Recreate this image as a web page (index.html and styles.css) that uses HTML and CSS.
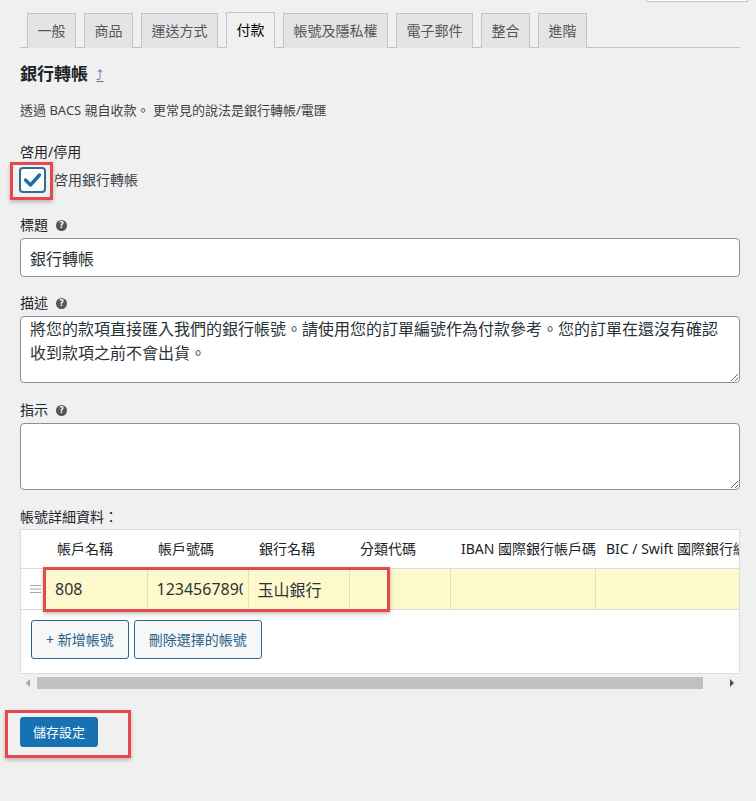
FILE: index.html
```html
<!DOCTYPE html>
<html lang="zh-Hant">
<head>
  <meta charset="UTF-8" />
  <meta name="viewport" content="width=device-width, initial-scale=1.0"/>
  <title>付款 ‹ WooCommerce 設定</title>
  <link rel="stylesheet" href="styles.css">
</head>
<body>
  <div class="screen-meta"><div class="screen-meta-tab"></div></div>

  <div class="wrap">
    <nav class="nav-tabs">
      <a class="nav-tab" href="#">一般</a>
      <a class="nav-tab" href="#">商品</a>
      <a class="nav-tab" href="#">運送方式</a>
      <a class="nav-tab active" href="#">付款</a>
      <a class="nav-tab" href="#">帳號及隱私權</a>
      <a class="nav-tab" href="#">電子郵件</a>
      <a class="nav-tab" href="#">整合</a>
      <a class="nav-tab" href="#">進階</a>
    </nav>

    <h2 class="section-title">銀行轉帳 <a class="back-link" href="#">⤴</a></h2>
    <p class="section-desc">透過 BACS 親自收款。 更常見的說法是銀行轉帳/電匯</p>

    <!-- 啓用/停用 -->
    <div class="field field-wide">
      <div class="field-label">啓用/停用</div>
      <label class="check-row">
        <span class="check-box">
          <svg width="23" height="22" viewBox="0 0 23 22">
            <path d="M4.5 11 L9.5 16 L18.5 6" fill="none" stroke="#1c6ea4" stroke-width="3.4" stroke-linecap="round" stroke-linejoin="round"/>
          </svg>
        </span>
        啓用銀行轉帳
      </label>
    </div>

    <div class="field field-wide">
      <div class="field-label">標題 <span class="help-tip">?</span></div>
      <input class="text-input" type="text" value="銀行轉帳">
    </div>

    <div class="field">
      <div class="field-label">描述 <span class="help-tip">?</span></div>
      <textarea class="text-area">將您的款項直接匯入我們的銀行帳號。請使用您的訂單編號作為付款參考。您的訂單在還沒有確認收到款項之前不會出貨。</textarea>
    </div>

    <div class="field field-loose">
      <div class="field-label">指示 <span class="help-tip">?</span></div>
      <textarea class="text-area"></textarea>
    </div>

    <!-- 帳號詳細資料 -->
    <div class="field field-loose">
      <div class="field-label tight">帳號詳細資料：</div>
      <div class="accounts">
        <table class="accounts-table">
          <colgroup>
            <col style="width: 25px">
            <col style="width: 101px">
            <col style="width: 101px">
            <col style="width: 101px">
            <col style="width: 101px">
            <col style="width: 145px">
            <col style="width: 180px">
          </colgroup>
          <thead>
            <tr>
              <th></th>
              <th>帳戶名稱</th>
              <th>帳戶號碼</th>
              <th>銀行名稱</th>
              <th>分類代碼</th>
              <th>IBAN 國際銀行帳戶碼</th>
              <th>BIC / Swift 國際銀行編號</th>
            </tr>
          </thead>
          <tbody>
            <tr>
              <td class="sort">
                <svg width="11" height="8" viewBox="0 0 11 8">
                  <path d="M0 0.5H11M0 4H11M0 7.5H11" stroke="#a7aaad" stroke-width="1"/>
                </svg>
              </td>
              <td><input type="text" value="808"></td>
              <td><input type="text" value="1234567890"></td>
              <td><input type="text" value="玉山銀行"></td>
              <td><input type="text" value=""></td>
              <td><input type="text" value=""></td>
              <td><input type="text" value=""></td>
            </tr>
          </tbody>
        </table>
        <div class="accounts-actions">
          <button class="button">+ 新增帳號</button>
          <button class="button">刪除選擇的帳號</button>
        </div>
        <div class="row-mark"></div>
      </div>

      <div class="hscroll">
        <span class="arrow-left"></span>
        <span class="thumb"></span>
        <span class="arrow-right"></span>
      </div>
    </div>

    <div class="submit">
      <span class="submit-mark">
        <button class="button-primary">儲存設定</button>
      </span>
    </div>
  </div>
</body>
</html>
```

FILE: styles.css
```css
* {
  box-sizing: border-box;
}
html {
  overflow: hidden;
}
html, body {
  margin: 0;
  padding: 0;
  background: #f0f0f1;
  color: #1d2327;
  font-family: "Noto Sans", "Noto Sans CJK TC", sans-serif;
  font-size: 14px;
  line-height: 20px;
}
a {
  text-decoration: none;
}

/* 右上角畫面選項 */
.screen-meta {
  display: flex;
  justify-content: flex-end;
  height: 2px;
  padding-right: 8px;
}
.screen-meta-tab {
  width: 102px;
  height: 2px;
  background: #fff;
  border: 1px solid #c3c4c7;
  border-top: none;
}

.wrap {
  width: 740px;
  padding: 0 0 40px 20px;
}

/* 分頁 */
.nav-tabs {
  display: flex;
  align-items: flex-end;
  margin-top: 10px;
  border-bottom: 1px solid #c3c4c7;
}
.nav-tab {
  margin-left: 8px;
  margin-bottom: -1px;
  padding: 5px 9.5px;
  line-height: 24px;
  font-size: 14px;
  color: #50575e;
  background: #e4e4e5;
  border: 1px solid #c3c4c7;
  border-bottom: none;
  white-space: nowrap;
}
.nav-tab:first-child {
  margin-left: 7px;
}
.nav-tab.active {
  background: #f0f0f1;
  color: #000;
  border-bottom: 1px solid #f0f0f1;
}

.section-title {
  margin: 14px 0 0;
  font-size: 17px;
  line-height: 24px;
  font-weight: 600;
  color: #1d2327;
}
.back-link {
  margin-left: 4px;
  font-family: "DejaVu Sans", sans-serif;
  font-size: 14px;
  font-weight: normal;
  color: #8a5aa8;
  text-decoration: underline;
}
.section-desc {
  margin: 13px 0 0;
  font-size: 13px;
  line-height: 20px;
  color: #3c434a;
}

/* 欄位 */
.field {
  margin-top: 16px;
}
.field-wide {
  margin-top: 22px;
}
.field-loose {
  margin-top: 17px;
}
.field-label {
  display: flex;
  align-items: center;
  gap: 8px;
  margin-bottom: 3px;
  font-size: 14px;
  line-height: 20px;
  color: #1d2327;
}
.field-label.tight {
  margin-bottom: 2px;
}
.help-tip {
  display: inline-flex;
  align-items: center;
  justify-content: center;
  width: 11px;
  height: 11px;
  border-radius: 50%;
  background: #50575e;
  color: #fff;
  font-family: "DejaVu Sans", sans-serif;
  font-size: 8px;
  font-weight: bold;
  line-height: 11px;
}

.check-row {
  display: flex;
  align-items: center;
  gap: 8px;
  margin-top: 5px;
  margin-left: -1px;
  font-size: 14px;
  line-height: 20px;
  color: #3c434a;
}
.check-box {
  position: relative;
  display: flex;
  align-items: center;
  justify-content: center;
  width: 27px;
  height: 26px;
  background: #fff;
  border: 2px solid #2a6e98;
  border-radius: 4px;
}
.check-box::after {
  content: "";
  position: absolute;
  top: -7px;
  left: -11px;
  right: -9px;
  bottom: -9px;
  border: 3px solid #e5484d;
  box-shadow: 0 2px 4px rgba(0, 0, 0, 0.25);
}

.text-input {
  display: block;
  width: 720px;
  height: 39px;
  padding: 0 9px;
  background: #fff;
  border: 1px solid #8c8f94;
  border-radius: 4px;
  font-family: inherit;
  font-size: 16px;
  color: #2c3338;
  outline: none;
}
.text-area {
  display: block;
  width: 720px;
  height: 67px;
  padding: 0 9px;
  background: #fff;
  border: 1px solid #8c8f94;
  border-radius: 4px;
  font-family: inherit;
  font-size: 16px;
  line-height: 24px;
  color: #2c3338;
  resize: vertical;
  overflow: hidden;
  outline: none;
}

/* 帳號表格 */
.accounts {
  position: relative;
  width: 720px;
  padding-bottom: 14px;
  background: #fff;
  border: 1px solid #dcdcde;
  overflow: hidden;
}
.accounts-table {
  width: 754px;
  table-layout: fixed;
  border-collapse: collapse;
}
.accounts-table th {
  height: 38px;
  padding: 0 11px;
  text-align: left;
  font-size: 14px;
  font-weight: normal;
  color: #1d2327;
  white-space: nowrap;
  border-bottom: 1px solid #dcdcde;
}
.accounts-table td {
  height: 41px;
  padding: 0;
  background: #fdf9cd;
  border-right: 1px solid #e4dfb4;
  border-bottom: 1px solid #dcdcde;
  overflow: hidden;
}
.accounts-table td.sort {
  background: #fff;
  border-right: none;
  text-align: center;
  padding-left: 3px;
}
.accounts-table td.sort svg {
  display: block;
  margin: 0 auto;
}
.accounts-table input {
  width: 100%;
  height: 40px;
  padding: 0 5px 0 9px;
  border: none;
  background: transparent;
  font-family: inherit;
  font-size: 16px;
  color: #2c3338;
  outline: none;
}
.accounts-actions {
  display: flex;
  gap: 5px;
  margin-top: 10px;
  padding-left: 10px;
}
.button {
  height: 39px;
  padding: 0 14px;
  background: #f6f7f7;
  border: 1px solid #2a6592;
  border-radius: 3px;
  font-family: inherit;
  font-size: 14px;
  color: #2a5f86;
  cursor: pointer;
}
.row-mark {
  position: absolute;
  top: 37px;
  left: 22px;
  width: 347px;
  height: 45px;
  border: 3px solid #e5484d;
  box-shadow: 0 2px 4px rgba(0, 0, 0, 0.25);
  pointer-events: none;
}

/* 水平捲軸 */
.hscroll {
  display: flex;
  align-items: center;
  width: 720px;
  height: 12px;
  margin-top: 3px;
}
.arrow-left {
  width: 0;
  height: 0;
  margin: 0 7px 0 6px;
  border-top: 4px solid transparent;
  border-bottom: 4px solid transparent;
  border-right: 4px solid #a3a3a3;
}
.thumb {
  width: 666px;
  height: 12px;
  background: #c1c1c1;
}
.arrow-right {
  width: 0;
  height: 0;
  margin-left: 27px;
  border-top: 4px solid transparent;
  border-bottom: 4px solid transparent;
  border-left: 4px solid #505050;
}

/* 儲存 */
.submit {
  margin-top: 28px;
}
.submit-mark {
  position: relative;
  display: inline-block;
  vertical-align: top;
}
.submit-mark::after {
  content: "";
  position: absolute;
  top: -7px;
  left: -15px;
  right: -33px;
  bottom: -11px;
  border: 3px solid #e5484d;
  box-shadow: 0 2px 4px rgba(0, 0, 0, 0.25);
  pointer-events: none;
}
.button-primary {
  display: block;
  height: 30px;
  padding: 0 12px;
  background: #1672b3;
  border: 1px solid #1672b3;
  border-radius: 3px;
  font-family: inherit;
  font-size: 13px;
  color: #fff;
  cursor: pointer;
}
```
